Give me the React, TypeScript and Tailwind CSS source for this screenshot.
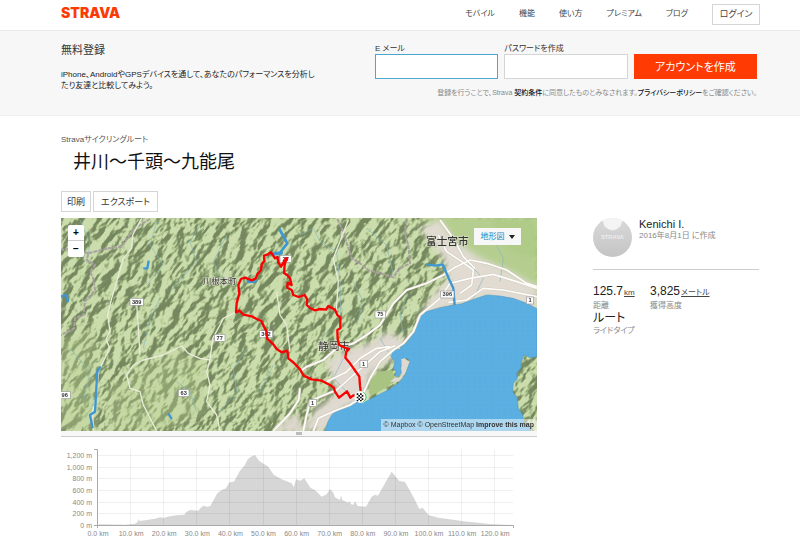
import React from "react";

const shields = [
  { x: 230, y: 260, w: 40, t: "389" },
  { x: 479, y: 368, w: 32, t: "77" },
  { x: 618, y: 357, w: 40, t: "362" },
  { x: 371, y: 534, w: 32, t: "63" },
  { x: 14, y: 540, w: 34, t: "96" },
  { x: 677, y: 131, w: 34, t: "27" },
  { x: 961, y: 298, w: 32, t: "75" },
  { x: 1162, y: 238, w: 40, t: "396" },
  { x: 1410, y: 256, w: 22, t: "1" },
  { x: 911, y: 446, w: 22, t: "1" },
  { x: 758, y: 563, w: 22, t: "1" },
];

const SEA =
  "M795 648L803 622L815 600L828 587L868 574L885 562L920 558L950 542L990 522L1018 502L1036 478L1050 438L1040 430L1028 433L1022 458L1024 475L1012 486L1004 482L1008 470L1000 460L1005 440L994 424L1000 402L1022 404L1020 390L1040 384L1062 352L1076 310L1095 291L1140 278L1180 270L1200 268L1250 250L1280 240L1320 243L1360 250L1400 265L1431 281V425L1410 428L1392 420L1384 440L1382 460L1370 475L1372 492L1360 505L1358 530L1372 550L1375 580L1388 600L1392 625L1410 636V648Z";

const ROUTE =
  "M904 545L900 512L898 485L870 445L856 428L859 410L867 402L850 396L838 390L833 372L832 345L841 340L841 308L832 300L825 284L805 273L798 284L780 282L765 286L750 279L740 270L742 254L734 240L716 246L700 240L695 225L682 218L683 203L695 210L690 190L681 180L672 174L674 150L679 132L672 140L663 155L655 142L652 126L645 130L633 112L624 118L612 122L613 138L605 148L603 165L592 178L587 190L575 196L555 188L543 192L535 210L538 235L530 265L528 292L539 287L550 299L575 304L590 312L604 318L612 335L620 350L621 370L640 388L650 402L665 412L682 407L685 430L702 444L720 463L731 482L755 493L785 497L810 510L821 518L825 530L837 548L861 529L871 548L880 541L900 546";

const ROADS = [
  "M720 520L716 555L690 595L640 648",
  "M720 470L740 455L790 435L830 400L880 385L920 360L960 330L985 290L1000 265L1040 225L1100 205L1150 180L1180 160L1230 135L1280 145L1340 165L1400 205L1431 215",
  "M760 648L775 610L830 585L870 570L905 547L930 490L960 440L1000 405L1030 385L1060 350L1080 300L1140 250L1170 205L1230 190L1300 178L1370 200L1431 220",
  "M780 545L830 525L880 480L910 455L960 410L1005 392",
  "M800 500L860 470L900 430L950 400L990 395",
  "M1135 60L1160 110L1205 140L1240 165L1235 210L1200 235",
  "M1140 15L1180 70L1210 125L1245 160",
  "M1165 262L1220 255L1270 220L1330 225L1431 245",
  "M780 545L750 560L740 600L730 648",
];

const MINOR = [
  "M245 10L218 60L215 100L190 130L180 165L170 200L155 250L143 300L150 350L138 372L149 400L115 470L112 520L105 560L98 590L100 648",
  "M200 480L220 450L250 435L310 420L365 393L385 415L420 430L450 435L440 470L450 510L440 560L470 600L480 648",
  "M450 435L458 370L480 330L490 310L525 292",
  "M230 265L235 340L240 420",
  "M200 480L210 520L240 530L250 570L290 648",
  "M865 15L820 130L835 200L828 300",
  "M650 230L660 300L680 330L690 410",
];

const RIVERS = [
  "M250 160L262 160L266 137",
  "M98 640L90 600L105 590L112 470L122 455",
  "M0 245L20 240L24 262",
  "M325 595L335 612",
  "M1100 148L1128 152L1148 148L1166 190L1180 220L1184 270",
];

const STREAMS =
  "M60 15l30 70l-10 60M290 20l-20 70l40 60l-50 60M420 30l-30 50l20 60l-80 90M500 60l-40 80l30 60M300 250l-30 60l-20 90M350 500l40 30l20 60M560 400l-40 60l10 70l-50 60M640 450l-40 80M30 400l60 70l-20 90M920 40l60 50l20 90M880 200l30 60l-20 70M1040 240l-20 60l10 60M810 340l-30 40M1190 80l30 60l50 50l-30 60M1290 50l40 80l-10 70M850 430l-30 60l40 40M960 370l50 80M720 60L760 40L780 80L830 110L840 200L842 300";

function RouteMap() {
  return (
    <svg viewBox="3 9 1428 639" preserveAspectRatio="xMidYMid slice" className="block h-[213px] w-full" role="img" aria-label="ルートマップ">
      <defs>
        <filter id="relief" x="0" y="0" width="100%" height="100%" colorInterpolationFilters="sRGB">
          <feTurbulence type="fractalNoise" baseFrequency="0.018 0.034" numOctaves="5" seed="7" />
          <feColorMatrix values="0 0 0 0 0  0 0 0 0 0  0 0 0 0 0  1 0.4 0 0 0" />
          <feDiffuseLighting surfaceScale="32" diffuseConstant="1.2" lightingColor="#ffffff">
            <feDistantLight azimuth="255" elevation="50" />
          </feDiffuseLighting>
          <feComponentTransfer>
            <feFuncR type="table" tableValues="0.46 0.48 0.53 0.61 0.70 0.80" />
            <feFuncG type="table" tableValues="0.53 0.55 0.61 0.69 0.78 0.87" />
            <feFuncB type="table" tableValues="0.37 0.39 0.43 0.50 0.57 0.68" />
          </feComponentTransfer>
        </filter>
        <filter id="soft" x="-10%" y="-10%" width="120%" height="120%">
          <feGaussianBlur stdDeviation="9" />
        </filter>
        <pattern id="waves" width="18" height="14" patternUnits="userSpaceOnUse">
          <rect width="18" height="14" fill="#59ade0" />
          <path d="M0 5l6-3l6 4l6-3M3 12l6-2l6 3" stroke="#66b5e4" strokeWidth="1.5" fill="none" />
        </pattern>
      </defs>
      <rect x="0" y="0" width="1440" height="660" fill="#a9bf84" />
      <g transform="rotate(-52 717 328)">
        <rect x="-100" y="-500" width="1640" height="1660" filter="url(#relief)" />
      </g>
      <g filter="url(#soft)">
        <path d="M0 380L110 330L100 480L110 648H0ZM240 460L360 410L440 440L430 600L300 648H150L140 520Z" fill="#b9cf93" opacity=".35" />
        <path d="M1090 0L1440 0V230L1330 200L1240 150L1200 110L1130 60Z" fill="#b5ce8f" />
        <path d="M1080 40L1140 15L1180 75L1260 130L1340 165L1431 215V290L1280 250L1150 285L1075 320L1110 250L1165 190L1150 130Z" fill="#e1dbd2" />
        <path d="M800 440L850 410L930 385L980 350L1040 375L1000 430L960 455L925 490L915 560L850 580L790 648H660L690 600L730 640L770 580L800 560L830 530Z" fill="#e0d9d1" />
        <path d="M1290 15L1431 15V130L1350 110Z" fill="#aecb85" opacity=".8" />
      </g>
      <path d="M926 500L955 470L995 465L1010 495L975 520L930 545Z" fill="#a9c383" />
      <path d="M640 648L720 590V648Z" fill="#ddd7cc" opacity=".7" />
      <path d={STREAMS} fill="none" stroke="#86b6bd" strokeWidth="2.5" opacity=".8" />
      <g fill="none" stroke="#a9a0a2" strokeWidth="6" strokeDasharray="12 3">
        <path d="M270 12L240 30L215 52L185 95L145 100L85 115L80 135L105 150L90 170L100 190L105 225L75 260L70 300L45 310L42 340L0 362" />
        <path d="M832 12L850 50L865 100L875 130L900 145L925 165L960 175L1000 187L1020 160L1050 145L1045 90L1035 60L1038 12" />
        <path d="M0 105L40 100L85 115" />
      </g>
      <g fill="none" stroke="#e8ecd9" strokeWidth="4" strokeLinejoin="round">
        {MINOR.map((d) => <path key={d} d={d} />)}
      </g>
      <path d={SEA} fill="url(#waves)" stroke="#4b93bf" strokeWidth="1.5" />
      <path d="M1024 432L1034 430L1048 440L1034 477L1016 500L990 500L1004 488L1016 488L1026 478Z" fill="#e0d9d1" />
      <g fill="none" stroke="#cfc9be" strokeWidth="8" strokeLinejoin="round">
        {ROADS.map((d) => <path key={d} d={d} />)}
      </g>
      <g fill="none" stroke="#fffefa" strokeWidth="5" strokeLinejoin="round">
        {ROADS.map((d) => <path key={d} d={d} />)}
      </g>
      <g fill="none" stroke="#3e96d2" strokeWidth="7" strokeLinejoin="round">
        {RIVERS.map((d) => <path key={d} d={d} />)}
        <path d="M658 42L668 60L682 85L664 108L660 122" strokeWidth="8" />
        <path d="M636 118L668 112M560 200L590 198" strokeWidth="10" />
      </g>
      {shields.map((s) => (
        <g key={s.x}>
          <rect x={s.x - s.w / 2} y={s.y - 10} width={s.w} height="21" fill="#fff" stroke="#999" strokeWidth="2" />
          <text x={s.x} y={s.y + 6} textAnchor="middle" fontSize="17" fontWeight="700" fill="#333" className="font-['Liberation_Sans',sans-serif]">{s.t}</text>
        </g>
      ))}
      <g className="font-['Noto_Sans_CJK_JP',sans-serif] [font-feature-settings:normal]" fill="#333" stroke="#dfe3cf" strokeWidth="3" paintOrder="stroke" textAnchor="middle">
        <text x="479" y="207" fontSize="25">川根本町</text>
        <text x="822" y="406" fontSize="32">静岡市</text>
        <text x="1162" y="89" fontSize="32" fontWeight="500">富士宮市</text>
      </g>
      <path d={ROUTE} fill="none" stroke="#fa0000" strokeWidth="7" strokeLinejoin="round" strokeLinecap="round" />
      <circle cx="679" cy="132" r="6" fill="#fa0000" />
      <circle cx="904" cy="546" r="17" fill="#23b51e" stroke="#fff" strokeWidth="2" />
      <circle cx="900" cy="546" r="17" fill="#fff" />
      <path d="M890 535h5v5h-5zM900 535h5v5h-5zM895 540h5v5h-5zM905 540h5v5h-5zM890 545h5v5h-5zM900 545h5v5h-5zM895 550h5v5h-5zM905 550h5v5h-5zM890 555h5v4h-5zM900 555h5v4h-5z" fill="#111" />
    </svg>
  );
}

const ELEVATION =
  "M127 286V285L135 283L210 284L240 281L248 275L250 267L254 273L275 270L300 266L315 262L325 264L345 259L370 255L388 254L395 245L405 240L430 242L440 230L450 227L456 231L466 228L487 190L500 180L513 175L523 157L537 155L555 122L570 105L578 88L590 79L600 75L612 92L622 99L640 110L656 134L680 148L710 160L716 172L723 148L735 152L748 145L767 174L780 180L800 200L815 193L825 177L835 188L840 202L855 210L858 196L862 210L880 218L885 213L888 223L895 224L900 214L908 228L933 230L950 200L960 194L969 197L990 160L1010 125L1033 153L1050 156L1075 200L1093 237L1103 233L1120 255L1150 263L1195 269L1225 274L1255 277L1305 282L1373 285V286Z";

const kmMarks = Array.from({ length: 13 }, (_, i) => i);
const elevationMarks = ["0", "200", "400", "600", "800", "1,000", "1,200"];

function ElevationChart() {
  return (
    <svg viewBox="0 0 476 96" className="mt-2 block w-full font-['Liberation_Sans',sans-serif]" role="img" aria-label="標高グラフ">
      <g transform="translate(-6 -15) scale(0.33333)">
        <path d={ELEVATION} fill="#d6d6d6" />
      </g>
      <g stroke="#000" strokeOpacity=".06">
        {kmMarks.slice(1).map((k) => <path key={k} d={`M${Math.round(36 + k * 33.1) + 0.5} 4V80`} />)}
        {elevationMarks.slice(1).map((m, i) => <path key={m} d={`M36 ${Math.round(68.3 - i * 11.7) + 0.5}H452`} />)}
      </g>
      <path d="M33 4.500H36.500V83M33 80.500H452.500V83" fill="none" stroke="#aaa" />
      <g fontSize="7" fill="#888">
        {elevationMarks.map((m, i) => <text key={m} x="31" y={83 - i * 11.7} textAnchor="end">{m} m</text>)}
        {kmMarks.map((k) => <text key={k} x={37 + k * 33.1} y="91" textAnchor="middle">{k * 10}.0 km</text>)}
      </g>
    </svg>
  );
}

const navItems = ["モバイル", "機能", "使い方", "プレミアム", "ブログ"];

export default function App() {
  return (
    <div className="min-h-screen bg-white font-['Liberation_Sans','Noto_Sans_CJK_JP',sans-serif] text-[8px] leading-3 text-[#333] [font-feature-settings:'palt']">
      <header className="flex h-[31px] items-center justify-between border-b border-[#eaeaea] pr-10 pb-1 pl-[61px]">
        <a href="#" className="font-['Inter',sans-serif] text-[14px] leading-4 font-black text-[#fc3a03]">STRAVA</a>
        <nav className="flex items-center gap-6 pt-[2px] text-[#444]">
          {navItems.map((n) => <a key={n} href="#">{n}</a>)}
          <a href="#" className="flex h-[21px] w-12 items-center justify-center border border-[#d5d5d5] text-[9px]">ログイン</a>
        </nav>
      </header>

      <section className="flex justify-between border-b border-[#eeeeee] bg-[#f7f7f7] pt-3 pr-[43px] pb-4 pl-[61px]">
        <div className="w-[256px]">
          <h2 className="text-[11px] leading-[14px]">無料登録</h2>
          <p className="mt-3 leading-[11px] text-[#222]">iPhone、AndroidやGPSデバイスを通して、あなたのパフォーマンスを分析したり友達と比較してみよう。</p>
        </div>
        <form className="w-[382px]" onSubmit={(e) => e.preventDefault()}>
          <div className="grid grid-cols-3 items-end gap-[6px]">
            <div>
              <label htmlFor="email" className="block leading-[11px]">E メール</label>
              <input id="email" type="email" className="block h-[25px] w-full border border-[#4ba6d0] bg-white px-2 outline-none" />
            </div>
            <div>
              <label htmlFor="password" className="block leading-[11px]">パスワードを作成</label>
              <input id="password" type="password" className="block h-[25px] w-full border border-[#d5d5d5] bg-white px-2 outline-none" />
            </div>
            <button type="submit" className="h-[25px] bg-[#ff3a03] text-[11px] text-white">アカウントを作成</button>
          </div>
          <p className="mt-2 text-right text-[7px] text-[#888]">
            登録を行うことで、Strava <a href="#" className="font-medium text-[#111]">契約条件</a>に同意したものとみなされます。<a href="#" className="font-medium text-[#111]">プライバシーポリシー</a>をご確認ください。
          </p>
        </form>
      </section>

      <main className="flex gap-14 pr-[41px] pl-[61px]">
        <div className="min-w-0 flex-1 pt-[18px]">
          <p className="text-[#555]">Stravaサイクリングルート</p>
          <h1 className="mt-1 pl-3 text-lg leading-6 text-[#111] [font-feature-settings:normal]">井川〜千頭〜九能尾</h1>
          <div className="mt-[17px] flex gap-[2px] text-[9px]">
            <button className="h-[21px] border border-[#d5d5d5] px-[5px]">印刷</button>
            <button className="h-[21px] border border-[#d5d5d5] px-[7px]">エクスポート</button>
          </div>
          <div className="relative mt-[6px]">
            <RouteMap />
            <div className="absolute top-[7px] left-[7px] w-4 rounded-[2px] bg-white text-[10px] leading-4 font-bold text-black">
              <button className="block h-4 w-full border-b border-[#ccc]" aria-label="拡大">+</button>
              <button className="block h-4 w-full" aria-label="縮小">−</button>
            </div>
            <button className="absolute top-[10px] right-4 flex h-[17px] w-[47px] items-center justify-center gap-1 bg-[#f7f7f7] text-[8px] text-[#2483bd]">
              地形図
              <svg viewBox="0 0 6 4" className="h-1 w-[6px]"><path d="M0 0h6l-3 4z" fill="#222" /></svg>
            </button>
            <p className="absolute right-0 bottom-0 bg-white/50 px-[3px] text-[7px] text-[#333]">
              <a href="#">© Mapbox</a> <a href="#">© OpenStreetMap</a> <a href="#" className="font-bold">Improve this map</a>
            </p>
          </div>
          <div className="flex h-[6px] items-center justify-center border-b border-[#ccc] bg-[#f7f7f7]">
            <span className="h-[3px] w-[6px] bg-[#bbb]" />
          </div>
          <ElevationChart />
        </div>

        <aside className="w-[166px] shrink-0 pt-[102px]">
          <div className="flex gap-[7px] border-b border-[#ccc] pb-3">
            <svg viewBox="0 0 40 40" className="size-[39px]" role="img" aria-label="Kenichi I.">
              <defs>
                <linearGradient id="jersey" x1="0" y1="0" x2="0" y2="1">
                  <stop offset="0" stopColor="#dadada" />
                  <stop offset="1" stopColor="#c4c4c4" />
                </linearGradient>
                <clipPath id="disc"><circle cx="20" cy="20" r="20" /></clipPath>
              </defs>
              <g clipPath="url(#disc)">
                <rect width="40" height="40" fill="url(#jersey)" />
                <path d="M9 0L12 9Q20 17 28 9L31 0Z" fill="#f4f4f4" />
                <path d="M12 9Q20 17 28 9M8 3Q8 10 1 13M32 3Q32 10 39 13" fill="none" stroke="#d0d0d0" strokeWidth=".7" />
              </g>
              <text x="20" y="22" textAnchor="middle" fontSize="6" fontWeight="700" fill="#ececec">STRAVA</text>
            </svg>
            <div>
              <h3 className="text-[11px] leading-[13px] text-[#222]">Kenichi I.</h3>
              <p className="leading-[10px] text-[#888]">2016年8月1日 に作成</p>
            </div>
          </div>
          <dl className="mt-[14px] grid grid-cols-[57px_1fr] leading-[11px] text-[#888]">
            <div className="flex flex-col-reverse">
              <dt>距離</dt>
              <dd className="text-xs leading-[14px] text-[#222]">125.7<abbr className="ml-px text-[8px] text-[#444] underline">km</abbr></dd>
            </div>
            <div className="flex flex-col-reverse">
              <dt>獲得高度</dt>
              <dd className="text-xs leading-[14px] text-[#222]">3,825<abbr className="ml-px text-[8px] text-[#444] underline">メートル</abbr></dd>
            </div>
            <div className="flex flex-col-reverse">
              <dt>ライドタイプ</dt>
              <dd className="text-xs leading-[14px] text-[#222]">ルート</dd>
            </div>
          </dl>
        </aside>
      </main>
    </div>
  );
}
